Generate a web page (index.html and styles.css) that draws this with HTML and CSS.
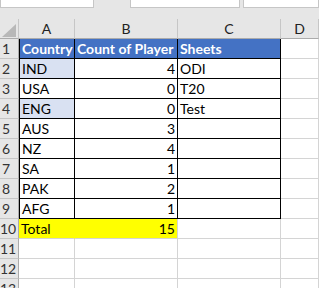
FILE: index.html
```html
<!DOCTYPE html>
<html lang="en">
<head>
    <meta charset="UTF-8">
    <title>Count of Player</title>
    <link rel="stylesheet" href="styles.css">
</head>
<body>
    <div class="topbar">
        <div class="namebox"></div>
        <div class="fxbox"></div>
        <div class="formula"></div>
    </div>

    <div class="sheet">
        <div class="row head">
            <div class="corner">
                <svg width="14" height="13" viewBox="0 0 14 13"><polygon points="14,0 14,13 0,13" fill="#b8b8b8"/></svg>
            </div>
            <div class="col">A</div>
            <div class="col">B</div>
            <div class="col">C</div>
            <div class="col">D</div>
        </div>

        <div class="row">
            <div class="num">1</div>
            <div class="cell b title first">Country</div>
            <div class="cell b title">Count of Player</div>
            <div class="cell b title">Sheets</div>
            <div class="cell"></div>
        </div>
        <div class="row">
            <div class="num">2</div>
            <div class="cell b first pick">IND</div>
            <div class="cell b right">4</div>
            <div class="cell b">ODI</div>
            <div class="cell"></div>
        </div>
        <div class="row">
            <div class="num">3</div>
            <div class="cell b first">USA</div>
            <div class="cell b right">0</div>
            <div class="cell b">T20</div>
            <div class="cell"></div>
        </div>
        <div class="row">
            <div class="num">4</div>
            <div class="cell b first pick">ENG</div>
            <div class="cell b right">0</div>
            <div class="cell b">Test</div>
            <div class="cell"></div>
        </div>
        <div class="row">
            <div class="num">5</div>
            <div class="cell b first">AUS</div>
            <div class="cell b right">3</div>
            <div class="cell b"></div>
            <div class="cell"></div>
        </div>
        <div class="row">
            <div class="num">6</div>
            <div class="cell b first">NZ</div>
            <div class="cell b right">4</div>
            <div class="cell b"></div>
            <div class="cell"></div>
        </div>
        <div class="row">
            <div class="num">7</div>
            <div class="cell b first">SA</div>
            <div class="cell b right">1</div>
            <div class="cell b"></div>
            <div class="cell"></div>
        </div>
        <div class="row">
            <div class="num">8</div>
            <div class="cell b first">PAK</div>
            <div class="cell b right">2</div>
            <div class="cell b"></div>
            <div class="cell"></div>
        </div>
        <div class="row">
            <div class="num">9</div>
            <div class="cell b first">AFG</div>
            <div class="cell b right">1</div>
            <div class="cell b"></div>
            <div class="cell"></div>
        </div>
        <div class="row">
            <div class="num">10</div>
            <div class="cell total">Total</div>
            <div class="cell total sum right">15</div>
            <div class="cell"></div>
            <div class="cell"></div>
        </div>
        <div class="row">
            <div class="num">11</div>
            <div class="cell"></div>
            <div class="cell"></div>
            <div class="cell"></div>
            <div class="cell"></div>
        </div>
        <div class="row">
            <div class="num">12</div>
            <div class="cell"></div>
            <div class="cell"></div>
            <div class="cell"></div>
            <div class="cell"></div>
        </div>
        <div class="row">
            <div class="num">13</div>
            <div class="cell"></div>
            <div class="cell"></div>
            <div class="cell"></div>
            <div class="cell"></div>
        </div>
    </div>
</body>
</html>
```

FILE: styles.css
```css
body {
    margin: 0;
    background: #ffffff;
    font-family: Lato, "Open Sans", sans-serif;
    font-size: 14px;
    color: #000000;
    overflow: hidden;
}

/* formula bar strip, cut off at the top */
.topbar {
    height: 19px;
    background: #e6e6e6;
    display: flex;
    align-items: flex-start;
}

.namebox, .fxbox, .formula {
    height: 8px;
    background: #ffffff;
    border: 1px solid #c6c6c6;
    border-top: none;
    box-sizing: border-box;
}

.namebox {
    width: 94px;
}

.fxbox {
    width: 110px;
    margin-left: 36px;
}

.formula {
    flex: 1;
    margin-left: 3px;
}

.row {
    display: grid;
    grid-template-columns: 19px 56px 103px 103px 1fr;
    height: 20px;
}

.row > div {
    box-sizing: border-box;
    height: 20px;
    line-height: 19px;
    white-space: nowrap;
    overflow: hidden;
}

/* column headers */
.head > div {
    background: #e6e6e6;
    border-right: 1px solid #c6c6c6;
    border-bottom: 1px solid #ababab;
    text-align: center;
    color: #222222;
}

.corner {
    display: flex;
    align-items: flex-end;
    justify-content: flex-end;
    padding: 0 2px 1px 0;
}

.num {
    background: #e6e6e6;
    border-right: 1px solid #ababab;
    border-bottom: 1px solid #c6c6c6;
    text-align: center;
    padding-right: 6px;
    color: #333333;
}

.cell {
    border-right: 1px solid #d4d4d4;
    border-bottom: 1px solid #d4d4d4;
    padding: 0 2px;
}

.cell.b {
    border-right-color: #000000;
    border-bottom-color: #000000;
}

.cell.first {
    border-left: 1px solid #000000;
    padding-left: 2px;
}

.title {
    background: #4472c4;
    color: #ffffff;
    font-weight: bold;
}

.pick {
    background: #d9e1f2;
}

.right {
    text-align: right;
}

.total {
    background: #ffff00;
    border-right-color: #ffff00;
}

.total.sum {
    border-right-color: #d4d4d4;
}
```
